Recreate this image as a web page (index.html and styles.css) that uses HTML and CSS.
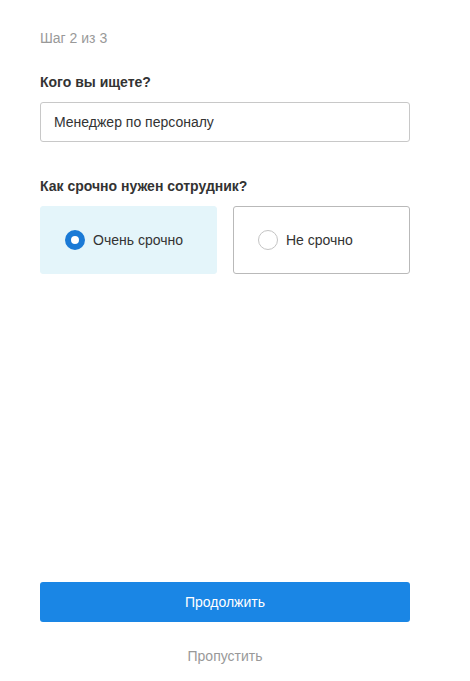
FILE: index.html
```html
<!DOCTYPE html>
<html lang="ru">
<head>
<meta charset="utf-8">
<title>Шаг 2 из 3</title>
<link rel="stylesheet" href="styles.css">
</head>
<body>
<div class="page">
  <div class="step">Шаг 2 из 3</div>
  <div class="label label-first">Кого вы ищете?</div>
  <div class="input">Менеджер по персоналу</div>
  <div class="label label-second">Как срочно нужен сотрудник?</div>
  <div class="options">
    <div class="option option-selected">
      <span class="radio radio-on"></span>
      <span class="option-text">Очень срочно</span>
    </div>
    <div class="option">
      <span class="radio"></span>
      <span class="option-text">Не срочно</span>
    </div>
  </div>
  <div class="actions">
    <div class="btn">Продолжить</div>
    <div class="skip">Пропустить</div>
  </div>
</div>
</body>
</html>
```
FILE: styles.css
```css
html, body {
  margin: 0;
  padding: 0;
  background: #fff;
}
.page {
  box-sizing: border-box;
  height: 681px;
  padding: 30px 60px 17px 40px;
  display: flex;
  flex-direction: column;
  font-family: "Liberation Sans", Arial, sans-serif;
  font-size: 14px;
  line-height: 16px;
  color: #333;
}
.step {
  color: #999;
}
.label {
  font-weight: bold;
  color: #333;
  margin-bottom: 12px;
}
.label-first {
  margin-top: 28px;
}
.label-second {
  margin-top: 36px;
}
.input {
  box-sizing: border-box;
  height: 40px;
  border: 1px solid #c8c8c8;
  border-radius: 3px;
  padding: 0 13px;
  display: flex;
  align-items: center;
  color: #333;
}
.options {
  display: grid;
  grid-template-columns: 1fr 1fr;
  gap: 16px;
}
.option {
  box-sizing: border-box;
  height: 68px;
  border: 1px solid #b9b9b9;
  border-radius: 3px;
  display: flex;
  align-items: center;
  padding-left: 24px;
  gap: 8px;
  color: #333;
}
.option-selected {
  background: #e4f5fa;
  border-color: #e4f5fa;
}
.radio {
  box-sizing: border-box;
  width: 20px;
  height: 20px;
  border-radius: 50%;
  border: 1px solid #c4c4c4;
  background: #fff;
  flex: none;
}
.radio-on {
  border: 6px solid #1a7ad6;
}
.actions {
  margin-top: auto;
  display: flex;
  flex-direction: column;
}
.btn {
  height: 40px;
  border-radius: 3px;
  background: #1a86e5;
  color: #fff;
  display: flex;
  align-items: center;
  justify-content: center;
}
.skip {
  margin-top: 26px;
  text-align: center;
  color: #999;
}
```
